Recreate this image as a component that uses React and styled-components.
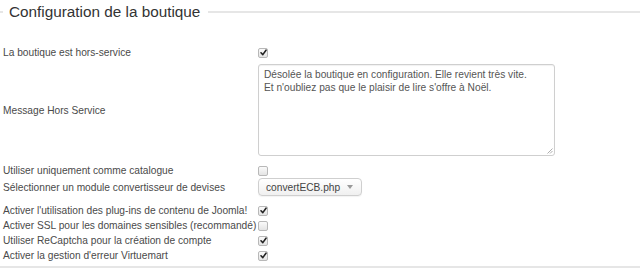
import React from "react";
import styled, { createGlobalStyle } from "styled-components";

const Global = createGlobalStyle`
  html, body { margin: 0; padding: 0; background: #fff; }
  body { font-family: "Liberation Sans", Arial, sans-serif; }
`;

const Page = styled.div`
  width: 640px;
  height: 279px;
  overflow: hidden;
  background: #fff;
`;

const Header = styled.div`
  display: flex;
  align-items: center;
  height: 24px;
  &::before {
    content: "";
    width: 3px;
    height: 2px;
    background: #e6e6e6;
  }
  &::after {
    content: "";
    flex: 1;
    height: 2px;
    background: #e6e6e6;
  }
`;

const Legend = styled.div`
  padding: 0 8px 0 6px;
  font-size: 15.3px;
  color: #333;
  line-height: 24px;
`;

const Form = styled.div`
  display: flex;
  flex-direction: column;
  padding: 21px 0 3px 3px;
  border-bottom: 2px solid #e6e6e6;
`;

const Row = styled.div`
  display: grid;
  grid-template-columns: 255px auto;
  align-items: center;
  min-height: ${(p) => p.$h || 15}px;
  margin-top: ${(p) => p.$mt || 0}px;
`;

const Label = styled.div`
  font-size: 10.2px;
  color: #4a4a4a;
  white-space: nowrap;
  line-height: 15px;
`;

const Box = styled.span`
  display: inline-flex;
  align-items: center;
  justify-content: center;
  width: 8px;
  height: 8px;
  border: 1px solid #b8b8b8;
  border-radius: 2px;
  background: linear-gradient(#fafafa, #e4e4e4);
  box-sizing: content-box;
  svg { display: block; }
`;

const Checkbox = ({ checked }) => (
  <Box>
    {checked && (
      <svg width="7" height="7" viewBox="0 0 7 7">
        <path d="M1 3.8 L2.8 5.6 L6 1.2" fill="none" stroke="#222" strokeWidth="1.6" strokeLinecap="round" strokeLinejoin="round" />
      </svg>
    )}
  </Box>
);

const Control = styled.div`
  display: flex;
  align-items: center;
`;

const TextArea = styled.div`
  box-sizing: border-box;
  width: 297px;
  height: 92px;
  border: 1px solid #cfcfcf;
  border-radius: 3px;
  box-shadow: inset 0 1px 1px rgba(0,0,0,0.06);
  padding: 3px 5px;
  font-size: 10.2px;
  line-height: 13px;
  color: #555;
  position: relative;
`;

const Grip = styled.svg`
  position: absolute;
  right: 1px;
  bottom: 1px;
`;

const Select = styled.div`
  box-sizing: border-box;
  width: 104px;
  height: 18px;
  border: 1px solid #cfcfcf;
  border-radius: 4px;
  background: linear-gradient(#ffffff, #f0f0f0);
  box-shadow: 0 1px 1px rgba(0,0,0,0.05);
  display: flex;
  align-items: center;
  justify-content: space-between;
  padding: 0 8px 0 7px;
  font-size: 10.2px;
  color: #444;
`;

const Arrow = styled.span`
  width: 0;
  height: 0;
  border-left: 3px solid transparent;
  border-right: 3px solid transparent;
  border-top: 4px solid #999;
`;

export default function App() {
  return (
    <Page>
      <Global />
      <Header>
        <Legend>Configuration de la boutique</Legend>
      </Header>
      <Form>
        <Row>
          <Label>La boutique est hors-service</Label>
          <Control><Checkbox checked /></Control>
        </Row>
        <Row $mt={4} $h={92}>
          <Label>Message Hors Service</Label>
          <Control>
            <TextArea>
              Désolée la boutique en configuration. Elle revient très vite.
              <br />
              Et n'oubliez pas que le plaisir de lire s'offre à Noël.
              <Grip width="6" height="6" viewBox="0 0 6 6">
                <path d="M0.5 5.5 L5.5 0.5 M3 5.5 L5.5 3" stroke="#999" strokeWidth="0.8" />
              </Grip>
            </TextArea>
          </Control>
        </Row>
        <Row $mt={7}>
          <Label>Utiliser uniquement comme catalogue</Label>
          <Control><Checkbox /></Control>
        </Row>
        <Row $h={18}>
          <Label>Sélectionner un module convertisseur de devises</Label>
          <Control>
            <Select>
              <span>convertECB.php</span>
              <Arrow />
            </Select>
          </Control>
        </Row>
        <Row $mt={7}>
          <Label>Activer l'utilisation des plug-ins de contenu de Joomla!</Label>
          <Control><Checkbox checked /></Control>
        </Row>
        <Row>
          <Label>Activer SSL pour les domaines sensibles (recommandé)</Label>
          <Control><Checkbox /></Control>
        </Row>
        <Row>
          <Label>Utiliser ReCaptcha pour la création de compte</Label>
          <Control><Checkbox checked /></Control>
        </Row>
        <Row>
          <Label>Activer la gestion d'erreur Virtuemart</Label>
          <Control><Checkbox checked /></Control>
        </Row>
      </Form>
    </Page>
  );
}
